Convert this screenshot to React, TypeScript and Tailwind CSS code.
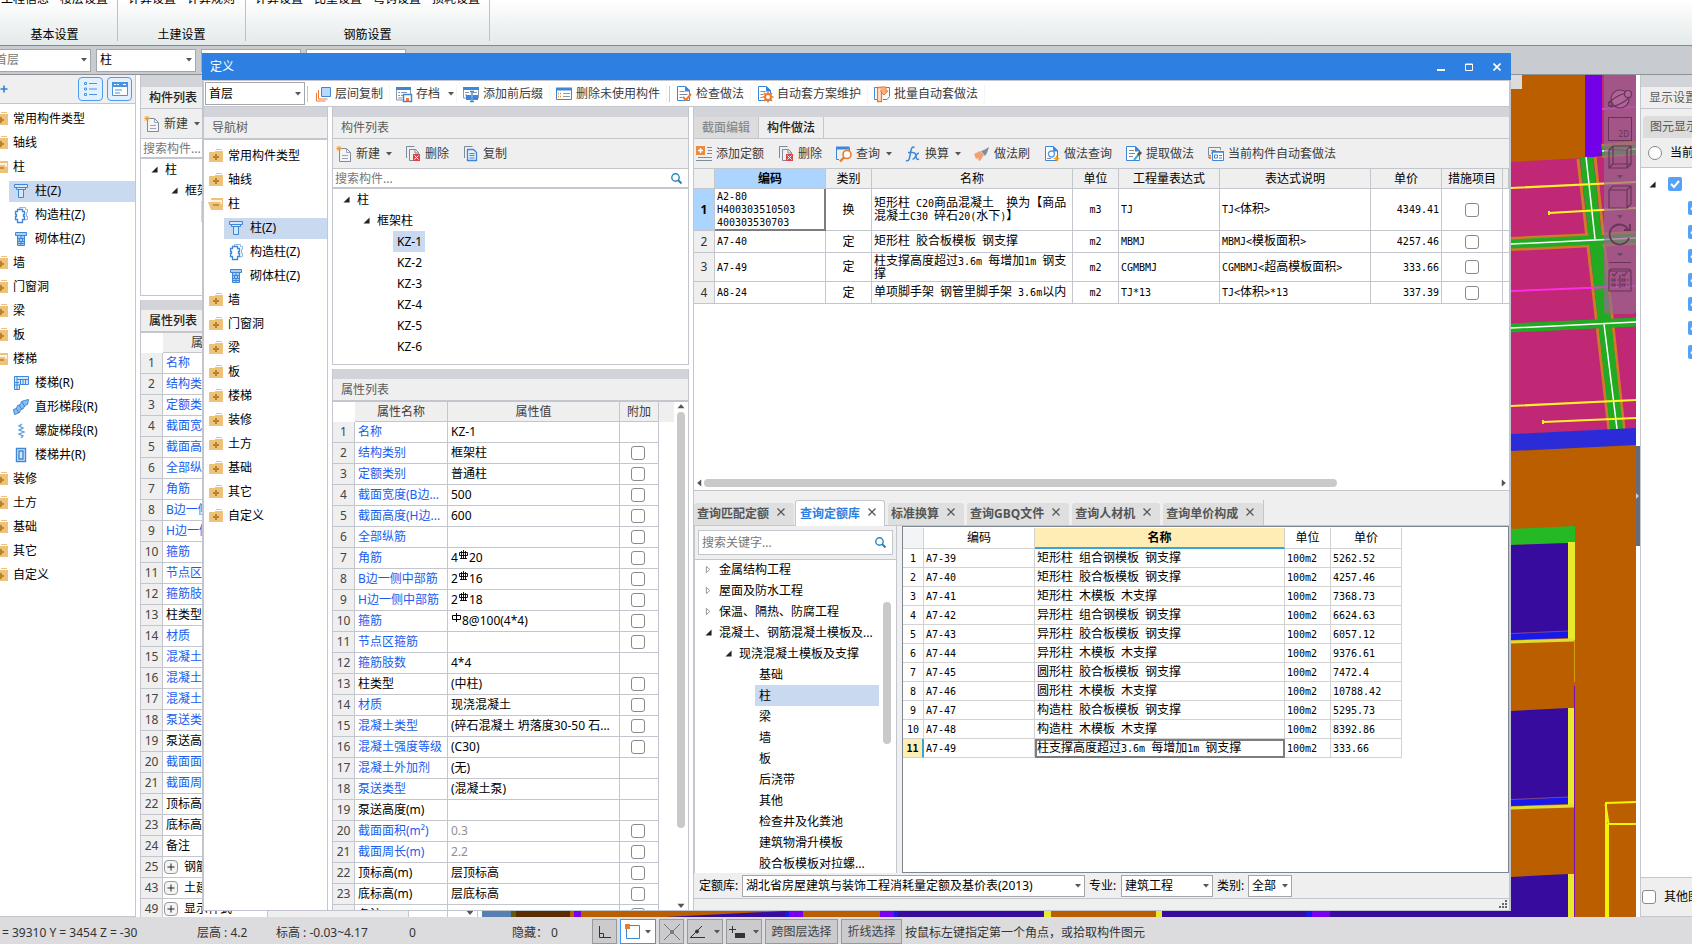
import { useState } from 'react';
import type { ReactNode } from 'react';
import clsx from 'clsx';

type TreeItem = { label: string; icon?: string; open?: boolean; children?: TreeItem[] };
type Prop = { no: number; name: string; value?: ReactNode; plain?: boolean; muted?: boolean; check?: boolean; group?: boolean };

const COLUMN_CHILDREN: TreeItem[] = [
  { label: '柱(Z)', icon: 'column' },
  { label: '构造柱(Z)', icon: 'ringColumn' },
  { label: '砌体柱(Z)', icon: 'brickColumn' },
];

const STAIR_CHILDREN: TreeItem[] = [
  { label: '楼梯(R)', icon: 'stair' },
  { label: '直形梯段(R)', icon: 'flight' },
  { label: '螺旋梯段(R)', icon: 'spiral' },
  { label: '楼梯井(R)', icon: 'well' },
];

function navTree(stairOpen: boolean): TreeItem[] {
  return [
    { label: '常用构件类型' },
    { label: '轴线' },
    { label: '柱', open: true, children: COLUMN_CHILDREN },
    { label: '墙' },
    { label: '门窗洞' },
    { label: '梁' },
    { label: '板' },
    { label: '楼梯', open: stairOpen, children: STAIR_CHILDREN },
    { label: '装修' },
    { label: '土方' },
    { label: '基础' },
    { label: '其它' },
    { label: '自定义' },
  ];
}

function Rebar({ grade }: { grade: number }) {
  return (
    <svg className="inline-block align-baseline mb-[2px] mx-px" width="9" height="10" viewBox="0 0 9 10" fill="none" stroke="#000">
      {grade > 1
        ? <path d="M0.5 2.5h8v3h-8zM4.500 0v9M2.500 1v8M6.500 1v8M1 8.500h7" strokeWidth=".9" />
        : <path d="M0.5 2.5h8v4h-8zM4.500 0v9" />}
    </svg>
  );
}

const PROPS: Prop[] = [
  { no: 1, name: '名称', value: 'KZ-1' },
  { no: 2, name: '结构类别', value: '框架柱', check: true },
  { no: 3, name: '定额类别', value: '普通柱', check: true },
  { no: 4, name: '截面宽度(B边...', value: '500', check: true },
  { no: 5, name: '截面高度(H边...', value: '600', check: true },
  { no: 6, name: '全部纵筋', check: true },
  { no: 7, name: '角筋', value: <>4<Rebar grade={3} />20</>, check: true },
  { no: 8, name: 'B边一侧中部筋', value: <>2<Rebar grade={3} />16</>, check: true },
  { no: 9, name: 'H边一侧中部筋', value: <>2<Rebar grade={3} />18</>, check: true },
  { no: 10, name: '箍筋', value: <><Rebar grade={1} />8@100(4*4)</>, check: true },
  { no: 11, name: '节点区箍筋', check: true },
  { no: 12, name: '箍筋肢数', value: '4*4' },
  { no: 13, name: '柱类型', value: '(中柱)', plain: true, check: true },
  { no: 14, name: '材质', value: '现浇混凝土', check: true },
  { no: 15, name: '混凝土类型', value: '(碎石混凝土 坍落度30-50 石...', check: true },
  { no: 16, name: '混凝土强度等级', value: '(C30)', check: true },
  { no: 17, name: '混凝土外加剂', value: '(无)' },
  { no: 18, name: '泵送类型', value: '(混凝土泵)' },
  { no: 19, name: '泵送高度(m)', plain: true },
  { no: 20, name: '截面面积(m²)', value: '0.3', muted: true, check: true },
  { no: 21, name: '截面周长(m)', value: '2.2', muted: true, check: true },
  { no: 22, name: '顶标高(m)', value: '层顶标高', plain: true, check: true },
  { no: 23, name: '底标高(m)', value: '层底标高', plain: true, check: true },
  { no: 24, name: '备注', plain: true, check: true },
  { no: 25, name: '钢筋业务属性', plain: true, group: true },
  { no: 43, name: '土建业务属性', plain: true, group: true },
  { no: 49, name: '显示样式', plain: true, group: true },
];

const METHODS = [
  { code: ['A2-80', 'H400303510503', '400303530703'], kind: '换', name: ['矩形柱 C20商品混凝土  换为【商品', '混凝土C30 碎石20(水下)】'], unit: 'm3', expr: 'TJ', desc: 'TJ<体积>', price: '4349.41', height: 'h-[42px]' },
  { code: ['A7-40'], kind: '定', name: ['矩形柱 胶合板模板 钢支撑'], unit: 'm2', expr: 'MBMJ', desc: 'MBMJ<模板面积>', price: '4257.46', height: 'h-[22px]' },
  { code: ['A7-49'], kind: '定', name: ['柱支撑高度超过3.6m 每增加1m 钢支', '撑'], unit: 'm2', expr: 'CGMBMJ', desc: 'CGMBMJ<超高模板面积>', price: '333.66', height: 'h-[29px]' },
  { code: ['A8-24'], kind: '定', name: ['单项脚手架 钢管里脚手架 3.6m以内'], unit: 'm2', expr: 'TJ*13', desc: 'TJ<体积>*13', price: '337.39', height: 'h-[22px]' },
];

const QUOTAS = [
  ['A7-39', '矩形柱 组合钢模板 钢支撑', '5262.52'],
  ['A7-40', '矩形柱 胶合板模板 钢支撑', '4257.46'],
  ['A7-41', '矩形柱 木模板 木支撑', '7368.73'],
  ['A7-42', '异形柱 组合钢模板 钢支撑', '6624.63'],
  ['A7-43', '异形柱 胶合板模板 钢支撑', '6057.12'],
  ['A7-44', '异形柱 木模板 木支撑', '9376.61'],
  ['A7-45', '圆形柱 胶合板模板 钢支撑', '7472.4'],
  ['A7-46', '圆形柱 木模板 木支撑', '10788.42'],
  ['A7-47', '构造柱 胶合板模板 钢支撑', '5295.73'],
  ['A7-48', '构造柱 木模板 木支撑', '8392.86'],
  ['A7-49', '柱支撑高度超过3.6m 每增加1m 钢支撑', '333.66'],
];

const QUERY_TABS = ['查询匹配定额', '查询定额库', '标准换算', '查询GBQ文件', '查询人材机', '查询单价构成'];
const CHAPTERS = ['金属结构工程', '屋面及防水工程', '保温、隔热、防腐工程'];
const SECTIONS = ['基础', '柱', '梁', '墙', '板', '后浇带', '其他', '检查井及化粪池', '建筑物滑升模板', '胶合板模板对拉螺...'];

const ICONS: Record<string, ReactNode> = {
  folder: (
    <>
      <path d="M8 1h6v1H8zM7 3h8v1H7zM1 4h14v10H1z" fill="#eec27b" />
      <path d="M8 6v6M5 9h6" stroke="#b9852a" strokeWidth="2" />
    </>
  ),
  folderOpen: (
    <>
      <path d="M3 2h12v12H4z" fill="#eec27b" />
      <path d="M3 4h11v4H3z" fill="#fff3da" />
      <path d="M0 6h12l3 8H3z" fill="#eec27b" />
      <path d="M5 9h6" stroke="#b9852a" strokeWidth="1.500" />
    </>
  ),
  column: <path d="M1.500 1.500h13v3h-13zM3.500 4.500h9v2h-9zM5.500 6.500h5v8h-5z" fill="#d5e8fb" stroke="#3e87d8" />,
  ringColumn: (
    <g fill="#fff" stroke="#3e87d8">
      <path d="M6.500 2.500V.5h6v2h2v3h-1v4h1v3h-2v1" stroke="#8bb9ea" />
      <path d="M4.500 2.500h5v2h2v3h-1v2h1v3h-2v3h-5v-3h-2v-3h1v-2h-1v-3h2z" strokeWidth="1.300" />
    </g>
  ),
  brickColumn: (
    <g stroke="#3e87d8">
      <path d="M2.500 1.500h11v3h-11zM4.500 4.500h7v10h-7z" fill="#a9cff5" />
      <path d="M4 7.500h8M4 10.500h8M4 12.500h8M8 4v3M6.500 7v3M9.500 7v3M8 10v4" />
    </g>
  ),
  stair: (
    <g stroke="#3e87d8" fill="#d5e8fb">
      <path d="M1.500 1.500h14v8h-9v5h-5z" />
      <path d="M4 1v13M4 4.500h11M7.500 4v5M10 4v5M12.500 4v5M1 7.500h5M1 10h5" fill="none" />
    </g>
  ),
  flight: (
    <g stroke="#3e87d8" fill="#8bbdf0">
      <path d="M.5 10.500l3-1 1-3 3-1 1-3 3-1 4-1-1 5-3 1-1 3-3 1-1 3-5 2z" />
      <path d="M3 9l3 5M6 6l3 5M9 3l3 5" fill="none" />
    </g>
  ),
  spiral: <path d="M9 1l-3 2 4 2-4 2 5 2-5 2 4 2-2 2" fill="none" stroke="#5c9ce0" strokeWidth="1.300" />,
  well: <path d="M3.500 1.500h9v13h-9zM6 4h4v8H6z" fill="#d5e8fb" stroke="#3e87d8" strokeWidth="1.400" />,
  layerCopy: (
    <g fill="none">
      <path d="M1.500 7v8h9" stroke="#ee7a3b" />
      <path d="M3.500 4v9h9" stroke="#ee7a3b" />
      <path d="M6.500 1.500h9v9h-9z" fill="#b5d8fb" stroke="#3e87d8" />
    </g>
  ),
  archive: (
    <g fill="none">
      <path d="M.5 2.500h14V14H.5z" fill="#fff" stroke="#8a98a8" />
      <path d="M0 2.500h15" stroke="#3e87d8" strokeWidth="3" />
      <path d="M2 6.500h2M5 6.500h6M2 9.500h2M5 9.500h2M2 12h4" stroke="#8a98a8" />
      <path d="M7.500 8.500h8v7h-8z" fill="#fff" stroke="#3e87d8" strokeWidth="1.500" />
      <path d="M10 12h3v3h-3z" fill="#ee7a3b" />
    </g>
  ),
  affix: (
    <g fill="none">
      <path d="M.5 2.500h15V12H.5z" fill="#fff" stroke="#8a98a8" />
      <path d="M0 2.500h16" stroke="#3e87d8" strokeWidth="3" />
      <path d="M2 6.500h4M10 6.500h4M2 9h2" stroke="#8a98a8" />
      <path d="M3 9h5v5H3zM10 9h5v5h-5z" fill="#3e87d8" />
      <path d="M7 5.500h4M9 5v10M7 15.500h4" stroke="#3e87d8" strokeWidth="1.400" />
    </g>
  ),
  unused: (
    <g fill="none">
      <path d="M.5 2.500h15v11H.5z" fill="#fff" stroke="#3e87d8" />
      <path d="M0 3h16" stroke="#3e87d8" strokeWidth="3" />
      <path d="M2 7.500h3M2 10.500h3" stroke="#e59130" strokeWidth="1.600" strokeDasharray="1 1" />
      <path d="M7 7.500h7M7 10.500h7" stroke="#8a98a8" />
    </g>
  ),
  check: (
    <g fill="none">
      <path d="M1.500.5h8l4 4v10h-12z" fill="#fff" stroke="#3e87d8" />
      <path d="M9 .5h1l4 4v1H9z" fill="#3e87d8" />
      <path d="M3.500 5.500h5M3.500 8.500h8M3.500 11.500h3" stroke="#7f8b99" />
      <path d="M7 11l3 3 5-6" stroke="#ee7a2b" strokeWidth="2" />
    </g>
  ),
  scheme: (
    <g fill="none">
      <path d="M1.500.5h8l4 4v10h-12z" fill="#fff" stroke="#3e87d8" />
      <path d="M9 .5h1l4 4v1H9z" fill="#3e87d8" />
      <path d="M3.500 5.500h5M3.500 8.500h3M3.500 11.500h2" stroke="#7f8b99" />
      <circle cx="11" cy="11" r="3" fill="#fff" stroke="#ee7a2b" strokeWidth="2" />
      <path d="M11 5.500v2M11 14.500v2M5.500 11h2M14.500 11h2M7 7l1.500 1.500M13.500 13.500l1.500 1.500M15 7l-1.500 1.500M8.500 13.500L7 15" stroke="#ee7a2b" strokeWidth="1.600" />
    </g>
  ),
  batch: (
    <g fill="none">
      <path d="M4 1.500H.5v12H3M9 13.500h4l2.500-3v-9H12" stroke="#3e87d8" />
      <path d="M3.500 1.500h4v14h-4z" fill="#fde0cc" stroke="#ee7a2b" strokeWidth="1.300" />
      <path d="M7 1h5v4h2l-4 4-3-3V4" fill="#f7b184" stroke="#ee7a2b" />
    </g>
  ),
  create: (
    <g fill="none">
      <path d="M3.500 2.500h7l4 4v9h-11z" fill="#f5f5f8" stroke="#7f8b99" />
      <path d="M10.500 2.500v4h4M6 9.500h6M6 12.500h6" stroke="#9aa4b0" />
      <path d="M1 .500l4 4M5 .5l-4 4M3 0v5M.5 2.500h5" stroke="#eb9a2a" />
    </g>
  ),
  remove: (
    <g fill="none">
      <path d="M1.500 12V.5h8M4.500 14.500v-11h6l3 3V9M4.500 14.500H8" stroke="#7f8b99" />
      <path d="M10 3v4h4" stroke="#7f8b99" />
      <path d="M8 8h7v7H8z" fill="#d9434a" />
      <path d="M9.500 9.500l4 4M13.500 9.500l-4 4" stroke="#fff" />
    </g>
  ),
  copy: (
    <g fill="none">
      <path d="M1.500 12V.5h8" stroke="#7f8b99" />
      <path d="M4.500 3.500h6l3 3v8h-9z" fill="#e4f0fc" stroke="#3e87d8" strokeWidth="1.300" />
      <path d="M6.500 7.500h5M6.500 9.500h5M6.500 12h5" stroke="#3e87d8" />
    </g>
  ),
  addQuota: (
    <g fill="none">
      <path d="M0 0h9v9H0z" fill="#ee8a3b" />
      <path d="M4.500 2v5M2 4.500h5" stroke="#fff" strokeWidth="1.400" />
      <path d="M11 1.500h5M12 4.500h4M11 7.500h5M2 11.500h14M0 14.500h16" stroke="#7f8b99" strokeWidth="1.200" />
    </g>
  ),
  query: (
    <g fill="none">
      <path d="M3 13.500H.5V2h13v3" stroke="#3e87d8" />
      <path d="M0 2h13.500" stroke="#3e87d8" strokeWidth="3" />
      <circle cx="11" cy="8.500" r="4" fill="#fff" stroke="#ee7a2b" strokeWidth="1.600" />
      <path d="M8 11.500L4 15.500" stroke="#ee7a2b" strokeWidth="2.400" />
    </g>
  ),
  fx: (
    <g fill="none" stroke="#3e87d8" strokeWidth="1.500">
      <path d="M9.500 1.500c-2-1-3 0-3.500 3L4.500 12c-.5 2.500-1.500 3-3.500 2.500M3 6.500h5" />
      <path d="M8 7c2-1 2.500 1 3 3.500s1 3.500 3 2.500M14 7c-2 0-2.500 2-3.500 3.500S9 13.500 7.500 13" />
    </g>
  ),
  brush: (
    <>
      <path d="M0 8l6-3 4 4-4 6-2-1 1-2-3 1z" fill="#f3a072" />
      <path d="M7 5l3-1 5-3-2 6-2 3z" fill="#7f8fa1" />
    </>
  ),
  methodQuery: (
    <g fill="none">
      <path d="M1.500.5h8l4 4v10h-12z" fill="#fff" stroke="#3e87d8" />
      <path d="M9 .5h1l4 4v1H9z" fill="#3e87d8" />
      <circle cx="7.500" cy="8" r="3" stroke="#5a9be2" strokeWidth="1.300" />
      <path d="M3 12.500h4" stroke="#7f8b99" />
      <path d="M12.500 9l1 2.500 2.500 1-2.500 1-1 2.500-1-2.500-2.500-1 2.500-1z" fill="#f0a020" />
    </g>
  ),
  extract: (
    <g fill="none">
      <path d="M.5.5h9l4 4v10H.5z" fill="#fff" stroke="#3e87d8" />
      <path d="M9 .5h1l4 4v1H9z" fill="#3e87d8" />
      <path d="M3 4.500h5M3 7.500h6M3 10.500h4" stroke="#7f8b99" />
      <path d="M8 14l5-6" stroke="#3fb0c8" strokeWidth="2" />
      <path d="M12 9l3-3" stroke="#555" strokeWidth="3" />
    </g>
  ),
  autoSet: (
    <g fill="none">
      <path d="M3 9.500H.5V1.500h12V4M3 4.500h5M3 7h1" stroke="#7f8b99" />
      <path d="M4.500 5.500h11v9h-11z" fill="#fff" stroke="#3e87d8" />
      <path d="M4 6h12" stroke="#3e87d8" strokeWidth="1.500" />
      <path d="M6.500 9h3v3h-3zM11 9.500h3M11 12h3" stroke="#3e87d8" />
      <path d="M0 11l3 0-1 2z" fill="#ee7a2b" stroke="#ee7a2b" />
    </g>
  ),
};

function Icon({ name, className = 'w-4 h-4' }: { name: string; className?: string }) {
  return (
    <svg viewBox="0 0 16 16" className={clsx('flex-none overflow-visible', className)}>
      {ICONS[name]}
    </svg>
  );
}

function Caret({ className = '' }: { className?: string }) {
  return (
    <svg viewBox="0 0 6 4" className={clsx('w-[6px] h-1 flex-none', className)}>
      <path d="M0 0h6L3 3.500z" fill="#555" />
    </svg>
  );
}

function Twisty({ open = true }: { open?: boolean }) {
  return (
    <svg viewBox="0 0 8 8" className="w-[7px] h-[7px] flex-none">
      {open ? <path d="M7.500 .5v7h-7z" fill="#222" /> : <path d="M1.500 .5l4 3.500-4 3.500z" fill="#fff" stroke="#888" />}
    </svg>
  );
}

function Magnifier() {
  return (
    <svg viewBox="0 0 11 11" className="w-[11px] h-[11px] flex-none" fill="none" stroke="#2585c4">
      <circle cx="4.500" cy="4.500" r="3.700" strokeWidth="1.400" />
      <path d="M7 7l3.500 3.500" strokeWidth="2" />
    </svg>
  );
}

function Select({ label, value, className, muted }: { label: string; value: string; className: string; muted?: boolean }) {
  return (
    <span className={clsx('relative block flex-none', className)}>
      <select
        aria-label={label}
        defaultValue={value}
        className={clsx('block w-full h-full appearance-none bg-white border border-[#a6a6aa] pl-[3px] pr-3 outline-none', muted ? 'text-[#777]' : 'text-black')}
      >
        <option>{value}</option>
      </select>
      <Caret className="absolute right-1 top-1/2 -mt-[2px] pointer-events-none" />
    </span>
  );
}

function Check({ label, className = '' }: { label: string; className?: string }) {
  return (
    <input
      type="checkbox"
      aria-label={label}
      className={clsx('block appearance-none w-[14px] h-[14px] flex-none bg-white border border-[#8a8a8a] rounded-[3px] checked:bg-[#4a9bf8]', className)}
    />
  );
}

function ToolButton({ icon, label, caret, boxed }: { icon: string; label: string; caret?: boolean; boxed?: boolean }) {
  return (
    <button className={clsx('flex items-center flex-none h-[22px] text-[#3c3c3c]', boxed && 'pl-[3px] pr-[6px] border border-transparent border-r-[#f4f4f4] rounded-sm')}>
      <Icon name={icon} />
      <span className="ml-1">{label}</span>
      {caret && <Caret className={boxed ? 'ml-2 -mr-1' : 'ml-[6px] -mr-px'} />}
    </button>
  );
}

// Half-width runs use a fixed-pitch face at half the width of a Chinese glyph
function Grid({ text }: { text: string }) {
  return (
    <span className="whitespace-pre">
      {text.split(/([\x20-\x7e]+)/).map((run, i) =>
        i % 2 ? <span key={i} className="font-['DejaVu_Sans_Mono',monospace] text-[10px]">{run}</span> : run
      )}
    </span>
  );
}

function NavTree({ items }: { items: TreeItem[] }) {
  return (
    <ul className="pt-1">
      {items.map(item => (
        <li key={item.label}>
          <div className="flex items-center h-6 pl-1">
            <Icon name={item.open ? 'folderOpen' : 'folder'} />
            <span className="ml-1">{item.label}</span>
          </div>
          {item.open && (
            <ul>
              {item.children?.map((child, i) => (
                <li key={child.label} className="flex items-center h-6 pl-5">
                  <div className={clsx('flex items-center h-[21px] flex-1 pl-1', i === 0 && child.icon === 'column' && 'bg-[#c9d9f0]')}>
                    <Icon name={child.icon || 'column'} />
                    <span className="ml-[6px]">{child.label}</span>
                  </div>
                </li>
              ))}
            </ul>
          )}
        </li>
      ))}
    </ul>
  );
}

function PanelTitle({ children, strong, deep }: { children: ReactNode; strong?: boolean; deep?: boolean }) {
  return (
    <div className="flex-none">
      <div className={clsx('bg-[#d3d4da]', deep ? 'h-3' : 'h-[10px]')} />
      <h2 className={clsx('h-[22px] pl-2 leading-[21px] bg-[#efefef] border-b border-[#c3c7cd]', strong ? 'font-medium text-[#222]' : 'text-[#5c5c5c]')}>{children}</h2>
    </div>
  );
}

function ComponentList({ back }: { back?: boolean }) {
  const [selected, setSelected] = useState('KZ-1');

  return (
    <section className="flex flex-col flex-none border border-t-0 border-[#c3c7cd] bg-white">
      <PanelTitle strong={back} deep={back}>构件列表</PanelTitle>
      <div className="flex items-center gap-[14px] h-[30px] pl-[3px] bg-[#efefef] border-b border-[#c3c7cd] overflow-hidden">
        <ToolButton icon="create" label="新建" caret />
        <ToolButton icon="remove" label="删除" />
        <ToolButton icon="copy" label="复制" />
      </div>
      <div className="flex items-center h-5 pl-[2px] pr-[6px] border-b-2 border-[#c3c7cd]">
        <input type="text" aria-label="搜索构件" placeholder="搜索构件..." className="flex-1 min-w-0 h-full bg-transparent outline-none placeholder:text-[#777]" />
        <Magnifier />
      </div>
      <div className={clsx('overflow-hidden', back ? 'h-[136px]' : 'h-[175px]')}>
        <div className="flex items-center gap-[7px] h-[21px] pl-[10px]"><Twisty />柱</div>
        <div className="flex items-center gap-[7px] h-[21px] pl-[30px]"><Twisty />框架柱</div>
        <ul>
          {['KZ-1', 'KZ-2', 'KZ-3', 'KZ-4', 'KZ-5', 'KZ-6'].map(kz => (
            <li key={kz} className="pl-[60px]">
              <button onClick={() => setSelected(kz)} className={clsx('block h-[21px] pl-1 pr-[3px]', selected === kz && 'bg-[#c9d9f0]')}>{kz}</button>
            </li>
          ))}
        </ul>
      </div>
    </section>
  );
}

function PropertyList({ back }: { back?: boolean }) {
  const cell = 'h-[21px] border-r border-b border-[#c3c7cd] p-0 overflow-hidden whitespace-nowrap';

  return (
    <section className="flex flex-col flex-1 min-h-0 border-x border-[#c3c7cd] bg-white overflow-hidden">
      <PanelTitle strong={back}>属性列表</PanelTitle>
      <div className="flex flex-1 min-h-0 border-t border-[#c3c7cd] overflow-hidden">
        <div className="flex-1 min-w-0">
          <table className="w-full table-fixed border-separate border-spacing-0">
            <colgroup>
              <col className="w-[22px]" />
              <col className={back ? 'w-[105px]' : 'w-[93px]'} />
              <col />
              <col className="w-[39px]" />
              <col className="w-[15px]" />
            </colgroup>
            <thead>
              <tr className="text-[#3c3c3c]">
                <th className="h-5 p-0"></th>
                <th className="p-0 font-normal bg-[#efefef] border-r border-b border-[#c3c7cd]">属性名称</th>
                <th className="p-0 font-normal bg-[#efefef] border-r border-b border-[#c3c7cd]">属性值</th>
                <th className="p-0 font-normal bg-[#efefef] border-r border-b border-[#c3c7cd]">附加</th>
                <th className="p-0 bg-[#efefef]"></th>
              </tr>
            </thead>
            <tbody>
              {PROPS.map(p => (
                <tr key={p.no}>
                  <td className={clsx(cell, 'bg-[#efefef] text-center text-[#444]')}>{p.no}</td>
                  <td className={clsx(cell, p.plain ? 'text-black' : 'text-[#1a5cf0]', p.group ? 'pl-px' : 'pl-[3px]')}>
                    {p.group ? (
                      <span className="flex items-center gap-[6px]">
                        <button aria-label={`展开${p.name}`} className="w-[14px] h-[14px] border border-[#999] rounded-sm bg-[#f4f4f4] flex items-center justify-center">
                          <svg viewBox="0 0 8 8" className="w-2 h-2"><path d="M4 .5v7M.5 4h7" stroke="#222" /></svg>
                        </button>
                        {p.name}
                      </span>
                    ) : p.name}
                  </td>
                  <td className={clsx(cell, 'pl-[3px]', p.muted ? 'text-[#909090]' : 'text-black', p.group && 'bg-[#efefef]')}>{p.value}</td>
                  <td className={cell}>{p.check && <Check label={`${p.name} 附加`} className="ml-[11px]" />}</td>
                  <td className="p-0"></td>
                </tr>
              ))}
            </tbody>
          </table>
        </div>
        <div className="w-[14px] flex flex-col items-center py-[2px]">
          <Caret className="rotate-180 scale-125" />
          <div className="w-2 mt-1 h-[416px] rounded-full bg-[#c9c9c9]" />
          <Caret className="mt-auto scale-125" />
        </div>
      </div>
    </section>
  );
}

function MethodTable() {
  const th = 'h-5 pt-px px-0 pb-0 font-normal border-r border-b border-[#c3c7cd] bg-[#efefef]';
  const td = 'border-r border-b border-[#c3c7cd] px-[2px] py-0 leading-3';

  return (
    <table className="w-full table-fixed border-separate border-spacing-0">
      <colgroup>
        <col className="w-[21px]" />
        <col className="w-[111px]" />
        <col className="w-[46px]" />
        <col className="w-[201px]" />
        <col className="w-[46px]" />
        <col className="w-[101px]" />
        <col />
        <col className="w-[71px]" />
        <col className="w-[61px]" />
        <col className="w-[6px]" />
      </colgroup>
      <thead>
        <tr>
          <th className={th}></th>
          <th className="h-5 pt-px px-0 pb-0 font-bold border-r border-b border-[#c3c7cd] bg-[#abd4fe]">编码</th>
          {['类别', '名称', '单位', '工程量表达式', '表达式说明', '单价', '措施项目', ''].map(h => <th key={h} className={th}>{h}</th>)}
        </tr>
      </thead>
      <tbody>
        {METHODS.map((m, i) => (
          <tr key={m.code[0]} className={m.height}>
            <td className={clsx('p-0 text-center border-r border-b border-[#c3c7cd]', i === 0 ? 'bg-[#abd4fe] font-bold' : 'bg-[#efefef] text-[#333]')}>{i + 1}</td>
            <td className={clsx('px-[2px] py-0 leading-3', i === 0 ? 'border-r-2 border-b-2 border-[#7d7d7d]' : 'border-r border-b border-[#c3c7cd]')}>
              {m.code.map(line => <div key={line}><Grid text={line} /></div>)}
            </td>
            <td className={clsx(td, 'text-center')}>{m.kind}</td>
            <td className={td}>{m.name.map(line => <div key={line}><Grid text={line} /></div>)}</td>
            <td className={clsx(td, 'text-center')}><Grid text={m.unit} /></td>
            <td className={td}><Grid text={m.expr} /></td>
            <td className={td}><Grid text={m.desc} /></td>
            <td className={clsx(td, 'text-right')}><Grid text={m.price} /></td>
            <td className={td}><Check label={`${m.code[0]} 措施项目`} className="mx-auto" /></td>
            <td className="p-0 border-b border-[#c3c7cd]"></td>
          </tr>
        ))}
      </tbody>
    </table>
  );
}

function QuotaTable() {
  const td = 'h-[19px] px-[2px] py-0 leading-3 border-r border-b border-[#d2d2d2]';

  return (
    <table className="w-[499px] mt-px table-fixed border-separate border-spacing-0">
      <colgroup>
        <col className="w-[21px]" />
        <col className="w-[111px]" />
        <col className="w-[250px]" />
        <col className="w-[46px]" />
        <col className="w-[71px]" />
      </colgroup>
      <thead>
        <tr className="h-[21px]">
          <th className="p-0 border-r border-b border-[#d2d2d2] bg-[#f3f4f6]"></th>
          <th className="p-0 font-normal border-r border-b border-[#d2d2d2]">编码</th>
          <th className="p-0 font-bold bg-[#feedb5] border-r border-r-[#d2d2d2] border-b-2 border-b-[#38a4d8]">名称</th>
          <th className="p-0 font-normal border-r border-b border-[#d2d2d2]">单位</th>
          <th className="p-0 font-normal border-r border-b border-[#d2d2d2]">单价</th>
        </tr>
      </thead>
      <tbody>
        {QUOTAS.map(([code, name, price], i) => {
          const current = i === 10;
          return (
            <tr key={code}>
              <td className={clsx('h-[19px] p-0 text-center border-b border-b-[#d2d2d2]', current ? 'bg-[#feedb5] font-bold border-r-2 border-r-[#38a4d8]' : 'border-r border-r-[#d2d2d2]')}><Grid text={String(i + 1)} /></td>
              <td className={td}><Grid text={code} /></td>
              <td className={clsx('h-[19px] px-[2px] py-0 leading-3', current ? 'outline-2 -outline-offset-2 outline-[#7d7d7d]' : 'border-r border-b border-[#d2d2d2]')}><Grid text={name} /></td>
              <td className={td}><Grid text="100m2" /></td>
              <td className={td}><Grid text={price} /></td>
            </tr>
          );
        })}
      </tbody>
    </table>
  );
}

function QueryPanel() {
  const [tab, setTab] = useState('查询定额库');
  const [section, setSection] = useState('柱');

  return (
    <section className="flex flex-col flex-none">
      <div role="tablist" className="flex items-end h-[35px] bg-[#efefef] border-b border-[#c3c7cd]">
        <div className="flex items-end gap-[3px] h-[25px] border-r border-[#c3c7cd]">
          {QUERY_TABS.map(name => (
            <button
              key={name}
              role="tab"
              onClick={() => setTab(name)}
              className={clsx(
                'flex items-center gap-2 font-bold rounded-t-[3px]',
                tab === name ? 'h-[26px] -mb-px -ml-[2px] pl-1 pr-2 bg-white border border-b-0 border-[#c3c7cd] text-[#2d80e2]' : 'h-[22px] pl-[3px] pr-[9px] bg-[#dfdfdf] text-[#555]'
              )}
            >
              {name}
              <svg viewBox="0 0 8 8" className="w-2 h-2 mb-1"><path d="M.5 .5l7 7M7.500 .5l-7 7" stroke="#555" strokeWidth="1.200" /></svg>
            </button>
          ))}
        </div>
      </div>
      <div className="flex h-[347px] bg-[#efefef]">
        <div className="w-[203px] flex flex-col border-x border-[#c3c7cd]">
          <div className="h-[34px] px-[3px] pt-1 border-b border-[#c3c7cd]">
            <div className="flex items-center h-[25px] pl-[3px] pr-[6px] bg-white border border-[#c3c7cd]">
              <input type="text" aria-label="搜索关键字" placeholder="搜索关键字..." className="flex-1 min-w-0 h-full bg-transparent outline-none placeholder:text-[#777]" />
              <Magnifier />
            </div>
          </div>
          <div className="flex flex-1 min-h-0 bg-white overflow-hidden">
            <ul className="flex-1 min-w-0 whitespace-nowrap -mt-px">
              {CHAPTERS.map(c => <li key={c} className="flex items-center gap-[7px] h-[21px] pl-[10px]"><Twisty open={false} />{c}</li>)}
              <li className="flex items-center gap-[7px] h-[21px] pl-[10px]"><Twisty />混凝土、钢筋混凝土模板及...</li>
              <li className="flex items-center gap-[7px] h-[21px] pl-[30px]"><Twisty />现浇混凝土模板及支撑</li>
              {SECTIONS.map(s => (
                <li key={s} className="pl-[60px] pr-1">
                  <button onClick={() => setSection(s)} className={clsx('block w-full h-[21px] pl-1 text-left', section === s && 'bg-[#c9d9f0]')}>{s}</button>
                </li>
              ))}
            </ul>
            <div className="w-[13px] pt-[42px]">
              <div className="w-2 h-[142px] rounded-full bg-[#c9c9c9]" />
            </div>
          </div>
        </div>
        <div className="flex-1 ml-[5px] bg-white border border-[#7c8590]">
          <QuotaTable />
        </div>
      </div>
      <div className="flex items-center h-[26px] pl-[5px] bg-[#efefef] border-b border-[#c3c7cd]">
        <span className="w-[43px]">定额库:</span>
        <Select label="定额库" value="湖北省房屋建筑与装饰工程消耗量定额及基价表(2013)" className="w-[343px] h-[22px]" />
        <span className="ml-1 w-8">专业:</span>
        <Select label="专业" value="建筑工程" className="w-[92px] h-[22px]" />
        <span className="ml-1 w-[31px]">类别:</span>
        <Select label="类别" value="全部" className="w-[44px] h-[22px]" />
      </div>
      <div className="flex items-end justify-end h-[11px] pr-[2px] pb-[2px] bg-[#efefef]">
        <svg viewBox="0 0 8 8" className="w-2 h-2" fill="#666"><path d="M6 0h2v2H6zM3 3h2v2H3zM6 3h2v2H6zM0 6h2v2H0zM3 6h2v2H3zM6 6h2v2H6z" /></svg>
      </div>
    </section>
  );
}

function DefineWindow() {
  return (
    <div role="dialog" aria-label="定义" className="absolute left-[202px] right-[181px] top-[53px] bottom-[33px] flex flex-col bg-white">
      <header className="flex items-center h-[27px] flex-none pl-2 pr-[10px] bg-[#2d80e2] text-white">
        <h1 className="flex-1">定义</h1>
        <div className="flex items-center gap-5">
          <button aria-label="最小化"><svg viewBox="0 0 8 8" className="w-2 h-2"><path d="M0 7h8" stroke="#fff" strokeWidth="2" /></svg></button>
          <button aria-label="最大化"><svg viewBox="0 0 8 8" className="w-2 h-2" fill="none" stroke="#fff"><path d="M.5 1h7v6.500h-7zM0 1.500h8" /></svg></button>
          <button aria-label="关闭"><svg viewBox="0 0 8 8" className="w-2 h-2"><path d="M.5 .5l7 7M7.500 .5l-7 7" stroke="#fff" strokeWidth="1.600" /></svg></button>
        </div>
      </header>

      <div className="flex flex-col flex-1 min-h-0 border-x-2 border-b border-[#c0c5ce]">
        <div className="flex items-center h-[27px] flex-none gap-[2px] pl-px border-y border-[#c3c7cd] bg-white">
          <Select label="楼层" value="首层" className="w-[100px] h-[23px]" />
          <span className="w-px h-4 mr-px bg-[#c3c7cd]" />
          <ToolButton boxed icon="layerCopy" label="层间复制" />
          <ToolButton boxed icon="archive" label="存档" caret />
          <ToolButton boxed icon="affix" label="添加前后缀" />
          <ToolButton boxed icon="unused" label="删除未使用构件" />
          <span className="w-px h-4 bg-[#c3c7cd]" />
          <ToolButton boxed icon="check" label="检查做法" />
          <ToolButton boxed icon="scheme" label="自动套方案维护" />
          <ToolButton boxed icon="batch" label="批量自动套做法" />
        </div>

        <div className="flex flex-1 min-h-0">
          <nav className="w-[124px] flex-none border-r border-[#c3c7cd]">
            <PanelTitle>导航树</PanelTitle>
            <div className="border-t border-[#c3c7cd]">
              <NavTree items={navTree(false)} />
            </div>
          </nav>

          <div className="flex flex-col w-[357px] flex-none gap-1 ml-1">
            <ComponentList />
            <PropertyList />
          </div>

          <div className="flex flex-col flex-1 min-w-0 ml-1 border-l border-[#c3c7cd]">
            <div className="h-[10px] flex-none bg-[#d3d4da]" />
            <div role="tablist" className="flex h-[22px] flex-none bg-[#efefef] border-b border-[#c3c7cd] font-medium">
              <button role="tab" className="w-[65px] bg-[#dcdcdc] text-[#8a8a8a] border-r border-[#c3c7cd]">截面编辑</button>
              <button role="tab" className="w-[65px] text-[#222] border-r border-[#c3c7cd]">构件做法</button>
            </div>
            <div className="flex items-center gap-[14px] h-[30px] flex-none pl-[2px] bg-[#efefef] border-b border-[#c3c7cd]">
              <ToolButton icon="addQuota" label="添加定额" />
              <ToolButton icon="remove" label="删除" />
              <ToolButton icon="query" label="查询" caret />
              <ToolButton icon="fx" label="换算" caret />
              <ToolButton icon="brush" label="做法刷" />
              <ToolButton icon="methodQuery" label="做法查询" />
              <ToolButton icon="extract" label="提取做法" />
              <ToolButton icon="autoSet" label="当前构件自动套做法" />
            </div>
            <div className="flex flex-col flex-1 min-h-0 border-b border-[#c3c7cd]">
              <MethodTable />
              <div className="flex items-center h-[14px] mt-auto px-[2px]">
                <Caret className="rotate-90 scale-125" />
                <div className="ml-[2px] mr-auto w-[78%] h-2 rounded-full bg-[#c9c9c9]" />
                <Caret className="-rotate-90 scale-125" />
              </div>
            </div>
            <QueryPanel />
          </div>
        </div>
      </div>
    </div>
  );
}

function ModelScene() {
  return (
    <svg className="absolute inset-0 w-full h-full" viewBox="482 75 1154 842" preserveAspectRatio="xMaxYMax slice">
      <path d="M482 75h1154v842H482z" fill="#ba5e00" />
      <path d="M1511 162l91-5V75h34v354l-125 5z" fill="#c02774" />
      <path d="M1585 75h17v81l-17 2z" fill="#7400ea" />
      <path d="M1511 75h11v14h-11z" fill="#dcdcdc" />
      <g fill="none">
        <path d="M1602 151l34-3M1511 244l125-6" stroke="#cf7a28" strokeWidth="14" />
        <path d="M1602 151l34-2" stroke="#22aa22" strokeWidth="9" />
        <path d="M1578 159l31 271M1595 157l29 272" stroke="#cf7a28" strokeWidth="3" />
        <path d="M1511 244l125-6M1511 328l125-6" stroke="#22aa22" strokeWidth="9" />
        <path d="M1580 158l13-1 30 272-13 1z" fill="#22aa22" />
        <path d="M1586 157l9 82M1604 324l13 105M1511 244l125-6M1511 328l125-6M1602 151l34-2" stroke="#fff" strokeWidth="1.500" />
        <path d="M1511 188l125-6M1549 213l87-5M1549 211v4M1511 406l125-6M1543 422l93-4M1543 420v4" stroke="#fff22a" strokeWidth="2" />
        <path d="M1511 291l125-5M1602 109l34-2" stroke="#ff2ce6" strokeWidth="2" />
      </g>
      <path d="M1511 434l125-6v17l-125 6z" fill="#2b2bd8" />

      <path d="M1511 529l64-3v17l-64 2z" fill="#26b926" />
      <path d="M1511 545l57-2v89l-57 2zM1511 711l57-3v89l-57 3zM1511 877l57-3v43h-57z" fill="#360b9e" />
      <path d="M1511 634l57-3v7l-57 2zM1511 800l57-3v7l-57 2z" fill="#1818e8" />
      <path d="M1511 633.500l57-2.500M1511 799.500l57-2.500" stroke="#7a4890" />
      <path d="M1568 542h7v98h-7zM1568 708h6v98h-6zM1568 874h6v43h-6z" fill="#e9e92e" />
      <path d="M1511 642l63-2M1511 808l63-2" stroke="#dede2e" strokeWidth="3" />
      <path d="M1574.500 640v42" stroke="#d0a010" />
      <path d="M1574.500 686v231" stroke="#7a10b0" />
      <path d="M1606 917V803l30-1M1605.500 804l3 20h28M1608 824v93" fill="none" stroke="#f4f400" strokeWidth="2" />

      <path d="M482 900h29v17h-29z" fill="#5680b0" />
      <path d="M511 900h5v17h-5z" fill="#5e5a10" />
      <path d="M516 900h54v17h-54z" fill="#5a2c00" />
      <path d="M574 900h7v17h-7zM789 900h14v17h-14zM880 900h14v17h-14z" fill="#7a00f0" />
      <path d="M665 917l120-6v6zM898 900h146v17H898zM1162 900h144v17h-144zM1330 900h181v17h-181z" fill="#360b9e" />
      <path d="M785 900h4v17h-4zM894 900h4v17h-4zM1306 900h6v17h-6z" fill="#1818e8" />
      <path d="M1312 900h18v17h-18z" fill="#7a00f0" />
      <path d="M1044 900h7v17h-7zM1156 900h6v17h-6z" fill="#e9e92e" />
    </svg>
  );
}

function ViewTools() {
  const stroke = { fill: 'none', stroke: '#683558', strokeWidth: 1.2 };
  return (
    <div className="absolute right-0 top-0 w-8 h-[239px] pt-3 flex flex-col items-center bg-[#96698f]/70 rounded-b">
      <button aria-label="三维旋转"><svg viewBox="0 0 24 24" className="w-6 h-6" {...stroke}><circle cx="12" cy="12" r="9" fill="#b0659a" /><ellipse cx="11" cy="13" rx="12" ry="4" transform="rotate(-28 11 13)" /><circle cx="20" cy="7" r="3.500" fill="#b0659a" /><circle cx="2" cy="17" r="2" /></svg></button>
      <button aria-label="二维" className="flex items-end justify-end w-6 h-6 mt-[6px] pr-[2px] text-[8px] leading-3 text-[#683558] border border-[#683558]">2D</button>
      <button aria-label="线框" className="mt-1"><svg viewBox="0 0 24 24" className="w-6 h-6" {...stroke}><path d="M1 5h18v18H1zM5 1h18v18H5zM1 5l4-4M19 5l4-4M1 23l4-4M19 23l4-4" /></svg></button>
      <Caret className="mt-[6px]" />
      <button aria-label="实体" className="mt-[6px]"><svg viewBox="0 0 24 24" className="w-6 h-6" {...stroke}><path d="M1 5h18v18H1zM1 5l4-4h18v18l-4 4M19 5l4-4" /></svg></button>
      <Caret className="mt-[6px]" />
      <button aria-label="旋转" className="mt-1"><svg viewBox="0 0 24 24" className="w-6 h-6" {...stroke} strokeWidth="1.800"><path d="M21 15a10 10 0 1 1-1-9M22 1v6h-6" /></svg></button>
      <Caret className="mt-[6px]" />
      <div className="w-[22px] h-px my-[5px] bg-[#683558]" />
      <button aria-label="图元显示"><svg viewBox="0 0 24 24" className="w-6 h-6" {...stroke}><path d="M1 3h22v20H1zM1 3l2-2h18l2 2M12 7v13M4 6l2 2 3-4M14 6l2 2 3-4M4 11h3v2H4zM4 16h3v2H4zM14 11h3v2h-3zM14 16h3v2h-3zM9 12h2M9 17h2M19 12h2M19 17h2" /></svg></button>
    </div>
  );
}

function DisplaySettings() {
  return (
    <aside className="flex flex-col w-[52px] flex-none border-l border-[#c3c7cd] bg-white whitespace-nowrap overflow-hidden">
      <PanelTitle deep>显示设置</PanelTitle>
      <div className="h-[29px] flex-none pt-[7px] pl-[2px] bg-[#efefef]">
        <button role="tab" className="w-[70px] h-[22px] pl-[7px] text-left bg-[#dcdcdc] text-[#555] rounded-tl">图元显示</button>
      </div>
      <label className="flex items-center h-[30px] flex-none gap-2 pl-[7px] bg-[#efefef] border-b border-[#c3c7cd]">
        <input type="radio" name="scope" className="appearance-none w-[14px] h-[14px] flex-none rounded-full bg-white border border-[#888]" />
        当前楼层
      </label>
      <div className="flex-1 min-h-0 pt-1">
        <div className="flex items-center gap-3 h-6 pl-2">
          <Twisty />
          <BlueCheck label="所有构件" />
        </div>
        {['轴线', '柱', '墙', '门窗洞', '梁', '板', '楼梯'].map(name => (
          <div key={name} className="flex items-center h-6 pl-[47px]"><BlueCheck label={name} /></div>
        ))}
      </div>
      <label className="flex items-center h-10 flex-none gap-2 pl-px bg-[#efefef] border-y border-[#c3c7cd]">
        <Check label="其他图元" />其他图元
      </label>
    </aside>
  );
}

function BlueCheck({ label }: { label: string }) {
  return (
    <span className="relative block w-[14px] h-[14px] flex-none">
      <input type="checkbox" defaultChecked aria-label={label} className="block appearance-none w-[14px] h-[14px] bg-[#55a2fa] rounded-[2px]" />
      <svg viewBox="0 0 14 14" className="absolute inset-0 pointer-events-none" fill="none" stroke="#fff" strokeWidth="2"><path d="M3 7l3 3 5-6" /></svg>
    </span>
  );
}

function StatusBar() {
  const btn = 'flex items-center justify-center h-[25px] border border-[#999] bg-[#cbcbcd] text-[#444]';
  return (
    <footer className="flex items-end h-[27px] flex-none bg-[#dcdcde] text-[#333] whitespace-nowrap leading-[23px]">
      <span className="w-[197px] pl-[2px]">= 39310 Y = 3454 Z = -30</span>
      <span className="w-[79px]">层高 : 4.2</span>
      <span className="w-[133px]">标高 : -0.03~4.17</span>
      <span className="w-[103px]">0</span>
      <span className="w-20">隐藏： 0</span>
      <div className="flex gap-[3px]">
        <button aria-label="正交" className={clsx(btn, 'w-[25px]')}><svg viewBox="0 0 14 14" className="w-[14px] h-[14px]" fill="none" stroke="#333"><path d="M1.500 1v11.500H13M1.500 8.500h4v4" /></svg></button>
        <button aria-label="捕捉" className="flex items-center justify-between w-9 h-[25px] px-1 bg-white border border-[#3a97f5]">
          <svg viewBox="0 0 15 15" className="w-[15px] h-[15px]" fill="none"><path d="M1.500 1.500h13v13h-13z" stroke="#3e87d8" /><path d="M0 0h5v5H0z" fill="#ee7a2b" /></svg>
          <Caret />
        </button>
        <button aria-label="交点" className={clsx(btn, 'w-[25px]')}><svg viewBox="0 0 16 16" className="w-4 h-4" fill="none" stroke="#777"><path d="M0 0l16 16M16 0L0 16" /><circle cx="8" cy="8" r="1.500" /></svg></button>
        <button aria-label="角度" className={clsx(btn, 'w-9 gap-2')}><svg viewBox="0 0 16 14" className="w-4 h-[14px]" fill="none" stroke="#333"><path d="M0 12.500h15M1 12L12 1" /><circle cx="7" cy="6.500" r="1.500" fill="#333" /></svg><Caret /></button>
        <button aria-label="动态输入" className={clsx(btn, 'w-9 gap-2')}><svg viewBox="0 0 16 14" className="w-4 h-[14px]"><path d="M0 4.500h7M3.500 1v7" stroke="#333" /><path d="M6 8h10v5H6z" fill="#333" /></svg><Caret /></button>
        <button className={clsx(btn, 'w-[73px]')}>跨图层选择</button>
        <button className={clsx(btn, 'w-[61px]')}>折线选择</button>
      </div>
      <span className="ml-[3px]">按鼠标左键指定第一个角点，或拾取构件图元</span>
    </footer>
  );
}

function RibbonGroup({ title, items, className }: { title: string; items: string[]; className: string }) {
  return (
    <div className={clsx('h-[41px] border-r border-[#bfc2c5] flex flex-col items-center', className)}>
      <div className="flex gap-[11px] h-4 -mt-[9px] leading-4">
        {items.map(name => <button key={name}>{name}</button>)}
      </div>
      <div className="mt-5 leading-4">{title}</div>
    </div>
  );
}

function App() {
  return (
    <div className="relative flex flex-col w-full h-screen overflow-hidden bg-white text-black text-xs font-['Noto_Sans','Noto_Sans_CJK_SC',sans-serif]">
      <div className="flex h-[46px] flex-none whitespace-nowrap bg-gradient-to-b from-white to-[#e4e9e9] border-b border-[#85888c]">
        <RibbonGroup title="基本设置" items={['工程信息', '楼层设置']} className="-ml-2 w-[126px]" />
        <RibbonGroup title="土建设置" items={['计算设置', '计算规则']} className="w-32" />
        <RibbonGroup title="钢筋设置" items={['计算设置', '比重设置', '弯钩设置', '损耗设置']} className="w-[244px]" />
      </div>
      <div className="flex items-center gap-[5px] h-[29px] flex-none bg-[#c8cbd0] border-b border-[#8e9196]">
        <Select label="当前楼层" value="首层" muted className="-ml-[9px] w-[100px] h-[23px]" />
        <Select label="构件类型" value="柱" className="w-[100px] h-[23px]" />
        <Select label="构件子类" value="" className="w-[100px] h-[23px]" />
        <Select label="构件名称" value="" className="w-[100px] h-[23px]" />
      </div>

      <div className="flex flex-1 min-h-0">
        <nav className="w-[136px] flex-none border-r border-b border-[#c3c7cd] overflow-hidden">
          <div className="flex items-center justify-end gap-1 h-[29px] pr-[3px] bg-[#efefef] border-b border-[#c3c7cd]">
            <svg viewBox="0 0 8 8" className="w-2 h-2 mr-auto"><path d="M4 .5v7M.5 4h7" stroke="#2d80e2" strokeWidth="1.600" /></svg>
            <button aria-label="列表视图" className="w-[25px] h-6 flex items-center justify-center border border-[#4b9bf0] bg-[#e3f0fd] rounded">
              <svg viewBox="0 0 14 14" className="w-[14px] h-[14px]" fill="none" stroke="#4b93e0"><path d="M.5 .5h2v2h-2zM.5 6h2v2h-2zM.5 11.500h2v2h-2zM5 1.500h8M5 7h8M5 12.500h8" /></svg>
            </button>
            <button aria-label="卡片视图" className="w-[25px] h-6 flex items-center justify-center border border-[#4b9bf0] bg-[#e3f0fd] rounded">
              <svg viewBox="0 0 16 14" className="w-4 h-[14px]" fill="none" stroke="#4b93e0"><path d="M.5 .5h15v13H.5z" fill="#fff" /><path d="M0 2.500h16" strokeWidth="5" /><path d="M2 2.500h2M5 2.500h2M11 2.500h3" stroke="#fff" /><path d="M3 8h7M3 11h5" /></svg>
            </button>
          </div>
          <div className="-ml-[11px] -mt-px">
            <NavTree items={navTree(true)} />
          </div>
        </nav>

        <div className="flex flex-col w-[338px] flex-none gap-1 ml-1">
          <ComponentList back />
          <PropertyList back />
        </div>

        <main className="relative flex-1 min-w-0 ml-1 overflow-hidden">
          <ModelScene />
          <ViewTools />
        </main>

        <div className="flex w-1 flex-none items-center">
          <button aria-label="收起面板" className="flex items-center w-1 h-[100px] bg-[#636c78]">
            <svg viewBox="0 0 4 6" className="w-1 h-[6px]"><path d="M0 0l3 3-3 3z" fill="#c8ccd2" /></svg>
          </button>
        </div>
        <DisplaySettings />
      </div>

      <StatusBar />
      <DefineWindow />
    </div>
  );
}

export default App;
